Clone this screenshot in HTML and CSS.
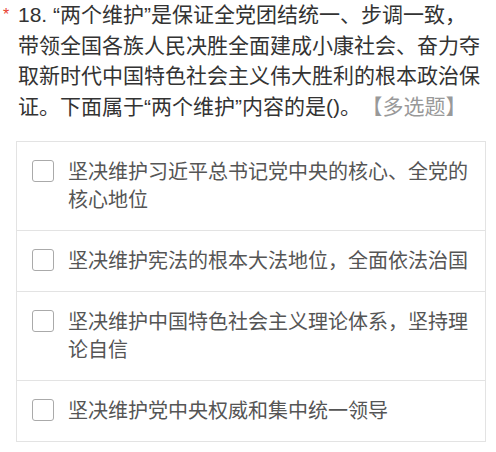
FILE: index.html
```html
<!DOCTYPE html>
<html lang="zh-CN">
<head>
<meta charset="utf-8">
<title>题目</title>
<link rel="stylesheet" href="styles.css">
</head>
<body>
<div class="question">
  <div class="q-title">
    <span class="req">*</span>
    <div class="q-text">18. “两个维护”是保证全党团结统一、步调一致，带领全国各族人民决胜全面建成小康社会、奋力夺取新时代中国特色社会主义伟大胜利的根本政治保证。下面属于“两个维护”内容的是()。<span class="q-type">【多选题】</span></div>
  </div>
  <ul class="options">
    <li class="option"><span class="box"></span><span class="label">坚决维护习近平总书记党中央的核心、全党的核心地位</span></li>
    <li class="option"><span class="box"></span><span class="label">坚决维护宪法的根本大法地位，全面依法治国</span></li>
    <li class="option"><span class="box"></span><span class="label">坚决维护中国特色社会主义理论体系，坚持理论自信</span></li>
    <li class="option"><span class="box"></span><span class="label">坚决维护党中央权威和集中统一领导</span></li>
  </ul>
</div>
</body>
</html>
```
FILE: styles.css
```css
html, body {
  margin: 0;
  padding: 0;
  background: #fff;
}
body {
  font-family: "Liberation Sans", "Noto Sans CJK SC", sans-serif;
}
.question {
  padding: 0 10px 0 0;
}
.q-title {
  display: flex;
  align-items: flex-start;
  padding-right: 5px;
}
.req {
  width: 18px;
  flex: none;
  color: #e8412f;
  font-size: 16px;
  line-height: 30px;
  padding-left: 3px;
  box-sizing: border-box;
}
.q-text {
  flex: 1;
  font-size: 21px;
  line-height: 30.5px;
  color: #333;
}
.q-type {
  color: #999;
  margin-left: 11px;
}
.options {
  list-style: none;
  margin: 19px 0 0 16px;
  padding: 0;
  border: 1px solid #e3e3e3;
}
.option {
  display: flex;
  align-items: flex-start;
  gap: 14px;
  padding: 16px 15px;
  font-size: 20px;
  line-height: 28px;
  color: #555;
}
.option + .option {
  border-top: 1px solid #e3e3e3;
}
.box {
  flex: none;
  width: 20px;
  height: 20px;
  margin-top: 2px;
  border: 1px solid #aaa;
  border-radius: 3px;
  background: #fff;
}
.label {
  flex: 1;
}
```
